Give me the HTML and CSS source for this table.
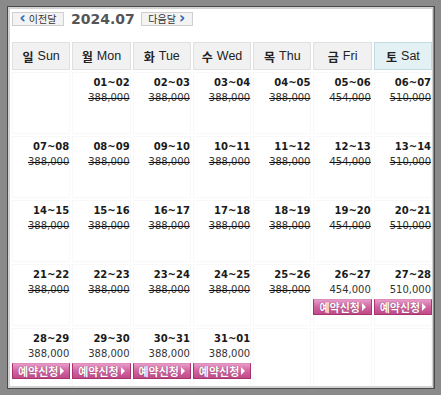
FILE: index.html
```html
<!DOCTYPE html>
<html lang="ko">
<head>
<meta charset="utf-8">
<link rel="stylesheet" href="styles.css">
</head>
<body>
<div class="frame">
  <div class="inner">
    <div class="nav">
      <span class="navbtn"><span class="chev">&#8249;</span> 이전달</span>
      <span class="month">2024.07</span>
      <span class="navbtn">다음달 <span class="chev">&#8250;</span></span>
    </div>
    <div class="grid">
      <div class="head"><b>일</b> Sun</div>
      <div class="head"><b>월</b> Mon</div>
      <div class="head"><b>화</b> Tue</div>
      <div class="head"><b>수</b> Wed</div>
      <div class="head"><b>목</b> Thu</div>
      <div class="head"><b>금</b> Fri</div>
      <div class="head sat"><b>토</b> Sat</div>

      <div class="cell"></div>
      <div class="cell"><div class="d">01~02</div><div class="p s">388,000</div></div>
      <div class="cell"><div class="d">02~03</div><div class="p s">388,000</div></div>
      <div class="cell"><div class="d">03~04</div><div class="p s">388,000</div></div>
      <div class="cell"><div class="d">04~05</div><div class="p s">388,000</div></div>
      <div class="cell"><div class="d">05~06</div><div class="p s">454,000</div></div>
      <div class="cell"><div class="d">06~07</div><div class="p s">510,000</div></div>

      <div class="cell"><div class="d">07~08</div><div class="p s">388,000</div></div>
      <div class="cell"><div class="d">08~09</div><div class="p s">388,000</div></div>
      <div class="cell"><div class="d">09~10</div><div class="p s">388,000</div></div>
      <div class="cell"><div class="d">10~11</div><div class="p s">388,000</div></div>
      <div class="cell"><div class="d">11~12</div><div class="p s">388,000</div></div>
      <div class="cell"><div class="d">12~13</div><div class="p s">454,000</div></div>
      <div class="cell"><div class="d">13~14</div><div class="p s">510,000</div></div>

      <div class="cell"><div class="d">14~15</div><div class="p s">388,000</div></div>
      <div class="cell"><div class="d">15~16</div><div class="p s">388,000</div></div>
      <div class="cell"><div class="d">16~17</div><div class="p s">388,000</div></div>
      <div class="cell"><div class="d">17~18</div><div class="p s">388,000</div></div>
      <div class="cell"><div class="d">18~19</div><div class="p s">388,000</div></div>
      <div class="cell"><div class="d">19~20</div><div class="p s">454,000</div></div>
      <div class="cell"><div class="d">20~21</div><div class="p s">510,000</div></div>

      <div class="cell"><div class="d">21~22</div><div class="p s">388,000</div></div>
      <div class="cell"><div class="d">22~23</div><div class="p s">388,000</div></div>
      <div class="cell"><div class="d">23~24</div><div class="p s">388,000</div></div>
      <div class="cell"><div class="d">24~25</div><div class="p s">388,000</div></div>
      <div class="cell"><div class="d">25~26</div><div class="p s">388,000</div></div>
      <div class="cell"><div class="d">26~27</div><div class="p">454,000</div><div class="btn">예약신청<span class="tri"></span></div></div>
      <div class="cell"><div class="d">27~28</div><div class="p">510,000</div><div class="btn">예약신청<span class="tri"></span></div></div>

      <div class="cell"><div class="d">28~29</div><div class="p">388,000</div><div class="btn">예약신청<span class="tri"></span></div></div>
      <div class="cell"><div class="d">29~30</div><div class="p">388,000</div><div class="btn">예약신청<span class="tri"></span></div></div>
      <div class="cell"><div class="d">30~31</div><div class="p">388,000</div><div class="btn">예약신청<span class="tri"></span></div></div>
      <div class="cell"><div class="d">31~01</div><div class="p">388,000</div><div class="btn">예약신청<span class="tri"></span></div></div>
      <div class="cell"></div>
      <div class="cell"></div>
      <div class="cell"></div>
    </div>
  </div>
</div>
</body>
</html>
```
FILE: styles.css
```css
html, body {
  margin: 0;
  padding: 0;
}
body {
  background: #8a8a8a;
  width: 441px;
  height: 395px;
  overflow: hidden;
  font-family: "DejaVu Sans", "Noto Sans CJK KR", sans-serif;
}
.frame {
  margin: 6px 0 0 7px;
  width: 426px;
  height: 381px;
  border: 1px solid #4a4a4a;
}
.inner {
  border-style: solid;
  border-color: #d2d2d2;
  border-width: 2px 1px 2px 2px;
  background: #fff;
  overflow: hidden;
  padding: 3px 0 0 2px;
  box-sizing: border-box;
  width: 425px;
  height: 381px;
}
.nav {
  display: flex;
  align-items: center;
  height: 14px;
}
.navbtn {
  display: flex;
  align-items: center;
  justify-content: center;
  gap: 3px;
  box-sizing: border-box;
  width: 52px;
  height: 14px;
  background: #f3f3f3;
  border: 1px solid #cfcfcf;
  font-family: "Noto Sans CJK KR", sans-serif;
  font-size: 10px;
  color: #333;
  line-height: 12px;
}
.chev {
  font-family: "DejaVu Sans", sans-serif;
  font-weight: bold;
  font-size: 15px;
  color: #2b64b0;
  line-height: 12px;
  margin-top: -2px;
}
.month {
  font-weight: bold;
  font-size: 14px;
  color: #555;
  margin: 0 6px 0 7px;
  line-height: 14px;
}
.grid {
  margin-top: 16px;
  display: grid;
  grid-template-columns: repeat(7, 58.3px);
  grid-template-rows: 28px repeat(5, 62px);
  gap: 2px;
}
.head {
  box-sizing: border-box;
  background: #f1f1f1;
  border: 1px solid #e0e0e0;
  display: flex;
  align-items: center;
  justify-content: center;
  font-family: "Liberation Sans", "Noto Sans CJK KR", sans-serif;
  font-size: 12.5px;
  color: #222;
  gap: 4px;
}
.head b {
  font-family: "Noto Sans CJK KR", sans-serif;
  font-size: 12px;
  font-weight: bold;
}
.head.sat {
  background: #e3f1f5;
  border-color: #c2dbe2;
}
.cell {
  box-sizing: border-box;
  background: #fff;
  border: 1px solid #f8f8f8;
  padding-top: 2px;
  text-align: right;
  white-space: nowrap;
}
.d {
  font-weight: bold;
  font-size: 10px;
  line-height: 15px;
  color: #1a1a1a;
}
.p {
  font-size: 10px;
  line-height: 16px;
  color: #333;
}
.p.s {
  text-decoration: line-through;
  text-decoration-color: #111;
}
.btn {
  margin: 1px -1px 0 -1px;
  height: 16px;
  box-sizing: border-box;
  background: linear-gradient(#e79ac7, #d2649f 50%, #bf4a89);
  border: 1px solid #a8336f;
  border-top-color: #dc8bba;
  color: #fff;
  font-family: "Noto Sans CJK KR", sans-serif;
  font-size: 11px;
  font-weight: bold;
  line-height: 14px;
  text-align: center;
  text-shadow: 0 0 1px #7a1f52;
  display: flex;
  align-items: center;
  justify-content: center;
  gap: 2px;
}
.tri {
  width: 0;
  height: 0;
  border-left: 4px solid #fff;
  border-top: 4px solid transparent;
  border-bottom: 4px solid transparent;
}
```
